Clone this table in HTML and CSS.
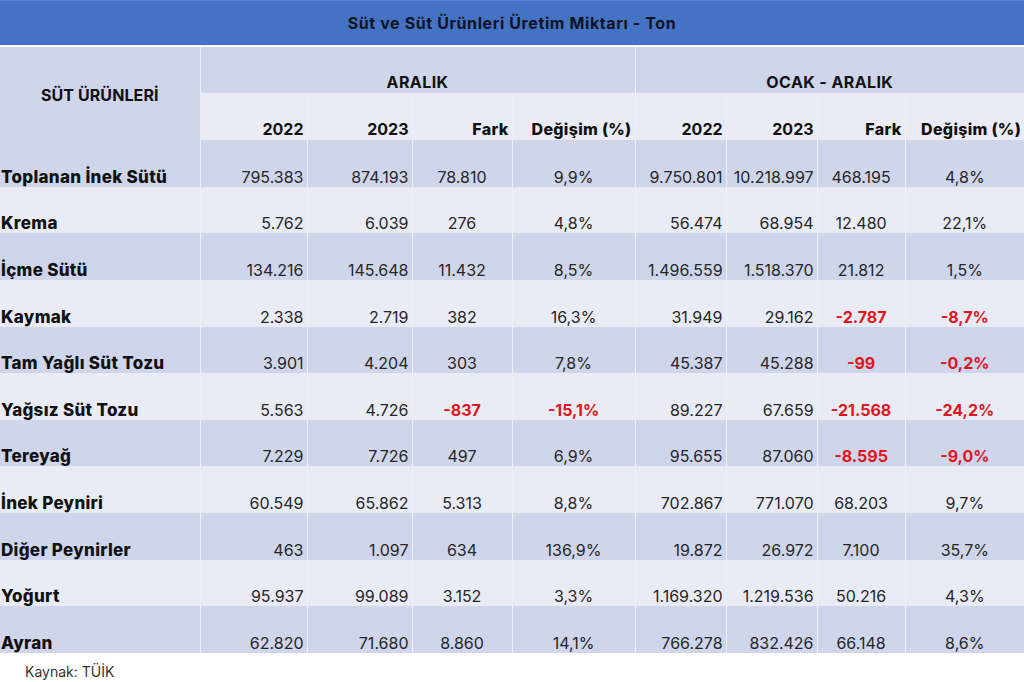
FILE: index.html
```html
<!DOCTYPE html>
<html lang="tr">
<head>
<meta charset="utf-8">
<title>Süt ve Süt Ürünleri Üretim Miktarı</title>
<link rel="stylesheet" href="styles.css">
</head>
<body>
<div class="sheet">
  <div class="title">Süt ve Süt Ürünleri Üretim Miktarı - Ton</div>
  <table class="data">
    <colgroup>
      <col class="c-name"><col class="c-a1"><col class="c-a2"><col class="c-a3"><col class="c-a4">
      <col class="c-o1"><col class="c-o2"><col class="c-o3"><col class="c-o4">
    </colgroup>
    <thead>
      <tr class="h1">
        <th class="corner" rowspan="2">SÜT ÜRÜNLERİ</th>
        <th class="group" colspan="4">ARALIK</th>
        <th class="group" colspan="4">OCAK - ARALIK</th>
      </tr>
      <tr class="h2">
        <th>2022</th><th>2023</th><th class="word">Fark</th><th class="word">Değişim (%)</th>
        <th>2022</th><th>2023</th><th class="word">Fark</th><th class="word">Değişim (%)</th>
      </tr>
    </thead>
    <tbody>
      <tr class="dark"><td class="name">Toplanan İnek Sütü</td><td>795.383</td><td>874.193</td><td class="mid">78.810</td><td class="mid">9,9%</td><td>9.750.801</td><td>10.218.997</td><td class="mid">468.195</td><td class="mid">4,8%</td></tr>
      <tr class="light"><td class="name">Krema</td><td>5.762</td><td>6.039</td><td class="mid">276</td><td class="mid">4,8%</td><td>56.474</td><td>68.954</td><td class="mid">12.480</td><td class="mid">22,1%</td></tr>
      <tr class="dark"><td class="name">İçme Sütü</td><td>134.216</td><td>145.648</td><td class="mid">11.432</td><td class="mid">8,5%</td><td>1.496.559</td><td>1.518.370</td><td class="mid">21.812</td><td class="mid">1,5%</td></tr>
      <tr class="light"><td class="name">Kaymak</td><td>2.338</td><td>2.719</td><td class="mid">382</td><td class="mid">16,3%</td><td>31.949</td><td>29.162</td><td class="mid neg">-2.787</td><td class="mid neg">-8,7%</td></tr>
      <tr class="dark"><td class="name">Tam Yağlı Süt Tozu</td><td>3.901</td><td>4.204</td><td class="mid">303</td><td class="mid">7,8%</td><td>45.387</td><td>45.288</td><td class="mid neg">-99</td><td class="mid neg">-0,2%</td></tr>
      <tr class="light"><td class="name">Yağsız Süt Tozu</td><td>5.563</td><td>4.726</td><td class="mid neg">-837</td><td class="mid neg">-15,1%</td><td>89.227</td><td>67.659</td><td class="mid neg">-21.568</td><td class="mid neg">-24,2%</td></tr>
      <tr class="dark"><td class="name">Tereyağ</td><td>7.229</td><td>7.726</td><td class="mid">497</td><td class="mid">6,9%</td><td>95.655</td><td>87.060</td><td class="mid neg">-8.595</td><td class="mid neg">-9,0%</td></tr>
      <tr class="light"><td class="name">İnek Peyniri</td><td>60.549</td><td>65.862</td><td class="mid">5.313</td><td class="mid">8,8%</td><td>702.867</td><td>771.070</td><td class="mid">68.203</td><td class="mid">9,7%</td></tr>
      <tr class="dark"><td class="name">Diğer Peynirler</td><td>463</td><td>1.097</td><td class="mid">634</td><td class="mid">136,9%</td><td>19.872</td><td>26.972</td><td class="mid">7.100</td><td class="mid">35,7%</td></tr>
      <tr class="light"><td class="name">Yoğurt</td><td>95.937</td><td>99.089</td><td class="mid">3.152</td><td class="mid">3,3%</td><td>1.169.320</td><td>1.219.536</td><td class="mid">50.216</td><td class="mid">4,3%</td></tr>
      <tr class="dark"><td class="name">Ayran</td><td>62.820</td><td>71.680</td><td class="mid">8.860</td><td class="mid">14,1%</td><td>766.278</td><td>832.426</td><td class="mid">66.148</td><td class="mid">8,6%</td></tr>
    </tbody>
  </table>
  <p class="source">Kaynak: TÜİK</p>
</div>
</body>
</html>
```

FILE: styles.css
```css
html, body {
  margin: 0;
  padding: 0;
  background: #ffffff;
}

body {
  font-family: Inter, "Noto Sans", "Open Sans", sans-serif;
  color: #262626;
}

.sheet {
  width: 1024px;
}

.title {
  height: 45px;
  margin-bottom: 2px;
  background: #4472c4;
  border-top: 1px solid #5a84cf;
  box-sizing: border-box;
  display: flex;
  align-items: center;
  justify-content: center;
  font-size: 16px;
  font-weight: 700;
  color: #111322;
  letter-spacing: 0.6px;
}

.data {
  width: 1024px;
  table-layout: fixed;
  border-collapse: collapse;
  border-spacing: 0;
  font-size: 16px;
  line-height: 20px;
}

.c-name { width: 200px; }
.c-a1 { width: 107px; }
.c-a2 { width: 105px; }
.c-a3 { width: 100px; }
.c-a4 { width: 123px; }
.c-o1 { width: 91px; }
.c-o2 { width: 91px; }
.c-o3 { width: 88px; }
.c-o4 { width: 119px; }

.data th,
.data td {
  padding: 0 3px 0 0;
  vertical-align: bottom;
  text-align: right;
  white-space: nowrap;
  border-left: 1px solid #eef0f8;
}

.data th:first-child,
.data td:first-child {
  border-left: none;
}

.data thead th {
  font-weight: 700;
  color: #111111;
}

.h1 {
  height: 46px;
  background: #cfd5ea;
}

.h1 .corner {
  background: #cfd5ea;
  text-align: center;
  vertical-align: middle;
  padding: 2px 0 0 0;
  font-size: 16px;
  letter-spacing: 0.1px;
}

.h1 .group {
  text-align: center;
  padding: 0 0 1px 0;
  font-size: 16px;
  letter-spacing: 0.4px;
}

.h2 {
  height: 47px;
  background: #e9ebf5;
}

.h2 th {
  padding-bottom: 1px;
}

.h2 th.word {
  font-weight: 800;
  letter-spacing: 0.3px;
}

.data tbody tr {
  height: 46.64px;
}

.dark { background: #cfd5ea; }
.light { background: #e9ebf5; }

.data td.name {
  text-align: left;
  padding: 0 0 0 1px;
  font-size: 17px;
  font-weight: 800;
  letter-spacing: 0.3px;
  color: #111111;
}

.data td.mid {
  text-align: center;
  padding-right: 0;
}

.data td.neg {
  color: #e3141c;
  font-weight: 700;
}

.source {
  margin: 0;
  padding: 9px 0 0 25px;
  font-size: 14px;
  line-height: 20px;
  color: #333333;
}
```
